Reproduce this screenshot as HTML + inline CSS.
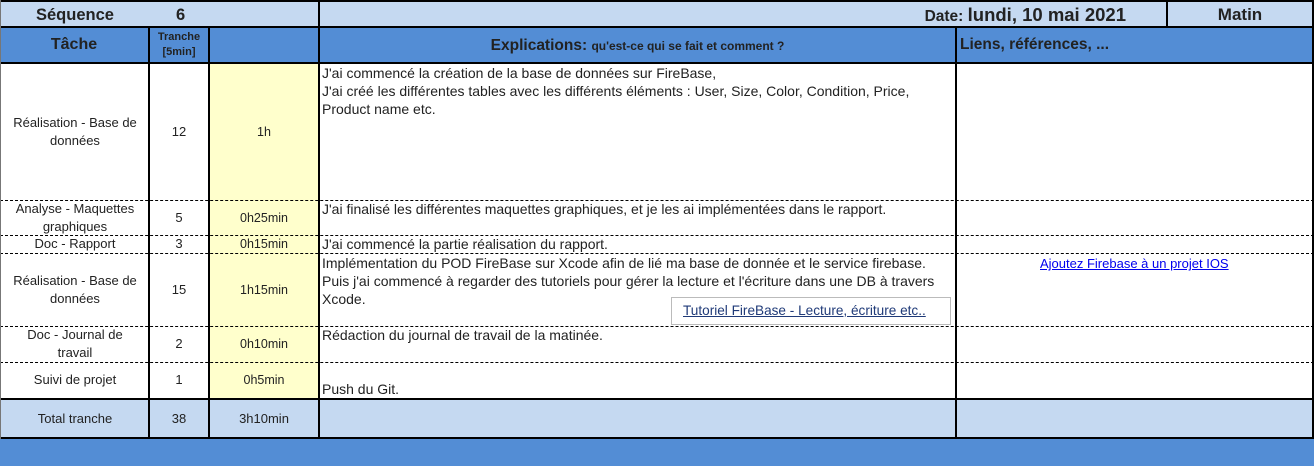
<!DOCTYPE html>
<html><head><meta charset="utf-8"><style>
*{margin:0;padding:0;box-sizing:border-box}
body{width:1314px;height:466px;background:#fff;position:relative;overflow:hidden;font-family:"Liberation Sans",sans-serif;color:#222}
.a{position:absolute}
.bg{position:absolute}
.v{position:absolute;background:#000;width:2px}
.h{position:absolute;background:#000;height:2px}
.d{position:absolute;height:0;border-top:1px dashed #000}
.c{position:absolute;display:flex;align-items:center;justify-content:center;text-align:center;font-size:13px;line-height:18px}
.t{position:absolute;font-size:14px;line-height:18px;white-space:nowrap}
</style></head><body>
<div class="bg" style="left:0;top:0;width:1314px;height:27px;background:#c5d9f1"></div>
<div class="bg" style="left:0;top:27px;width:1314px;height:36px;background:#538dd5"></div>
<div class="bg" style="left:210px;top:63px;width:109px;height:336px;background:#ffffcc"></div>
<div class="bg" style="left:0;top:399px;width:1314px;height:39px;background:#c5d9f1"></div>
<div class="bg" style="left:0;top:439px;width:1314px;height:27px;background:#538dd5"></div>
<div class="h" style="left:0;top:0;width:1314px"></div>
<div class="h" style="left:0;top:26px;width:1314px"></div>
<div class="h" style="left:0;top:62px;width:1314px"></div>
<div class="d" style="left:0;top:200px;width:1314px"></div>
<div class="d" style="left:0;top:235px;width:1314px"></div>
<div class="d" style="left:0;top:253px;width:1314px"></div>
<div class="d" style="left:0;top:326px;width:1314px"></div>
<div class="d" style="left:0;top:362px;width:1314px"></div>
<div class="h" style="left:0;top:398px;width:1314px"></div>
<div class="h" style="left:0;top:437px;width:1314px"></div>
<div class="v" style="left:0;top:0;height:439px;width:1px;background:#777"></div>
<div class="v" style="left:318px;top:0;height:439px"></div>
<div class="v" style="left:1312px;top:0;height:439px"></div>
<div class="v" style="left:1166px;top:0;height:27px"></div>
<div class="v" style="left:148px;top:27px;height:412px"></div>
<div class="v" style="left:208px;top:27px;height:412px"></div>
<div class="v" style="left:955px;top:27px;height:412px"></div>
<div class="t" style="left:36px;top:5px;font-size:16.5px;font-weight:bold;line-height:20px">Séquence</div>
<div class="t" style="left:176px;top:5px;font-size:16.5px;font-weight:bold;line-height:20px">6</div>
<div class="t" style="right:188px;top:5px;font-weight:bold;font-size:15.5px;line-height:20px">Date: <span style="font-size:18.5px">lundi, 10 mai 2021</span></div>
<div class="c" style="left:1168px;top:3px;width:144px;height:24px;font-size:17px;font-weight:bold">Matin</div>
<div class="c" style="left:0;top:28px;width:148px;height:34px;font-size:16px;font-weight:bold">Tâche</div>
<div class="c" style="left:150px;top:28px;width:58px;height:34px;font-size:11px;font-weight:bold;line-height:15px">Tranche<br>[5min]</div>
<div class="c" style="left:320px;top:29px;width:635px;height:34px;font-weight:bold;font-size:15.5px">Explications:&nbsp;<span style="font-size:12px">qu'est-ce qui se fait et comment ?</span></div>
<div class="t" style="left:960px;top:36px;font-weight:bold;font-size:15.5px">Liens, références, ...</div>
<div class="c" style="left:2px;top:63px;width:146px;height:137px">Réalisation - Base de<br>données</div>
<div class="c" style="left:2px;top:200px;width:146px;height:35px">Analyse - Maquettes<br>graphiques</div>
<div class="c" style="left:2px;top:235px;width:146px;height:18px">Doc - Rapport</div>
<div class="c" style="left:2px;top:253px;width:146px;height:73px">Réalisation - Base de<br>données</div>
<div class="c" style="left:2px;top:326px;width:146px;height:36px">Doc - Journal de<br>travail</div>
<div class="c" style="left:2px;top:362px;width:146px;height:36px">Suivi de projet</div>
<div class="c" style="left:2px;top:400px;width:146px;height:37px">Total tranche</div>
<div class="c" style="left:150px;top:63px;width:58px;height:137px">12</div>
<div class="c" style="left:150px;top:200px;width:58px;height:35px">5</div>
<div class="c" style="left:150px;top:235px;width:58px;height:18px">3</div>
<div class="c" style="left:150px;top:253px;width:58px;height:73px">15</div>
<div class="c" style="left:150px;top:326px;width:58px;height:36px">2</div>
<div class="c" style="left:150px;top:362px;width:58px;height:36px">1</div>
<div class="c" style="left:150px;top:400px;width:58px;height:37px">38</div>
<div class="c" style="left:210px;top:63px;width:108px;height:137px;font-size:12.5px">1h</div>
<div class="c" style="left:210px;top:200px;width:108px;height:35px;font-size:12.5px">0h25min</div>
<div class="c" style="left:210px;top:235px;width:108px;height:18px;font-size:12.5px">0h15min</div>
<div class="c" style="left:210px;top:253px;width:108px;height:73px;font-size:12.5px">1h15min</div>
<div class="c" style="left:210px;top:326px;width:108px;height:36px;font-size:12.5px">0h10min</div>
<div class="c" style="left:210px;top:362px;width:108px;height:36px;font-size:12.5px">0h5min</div>
<div class="c" style="left:210px;top:400px;width:108px;height:37px">3h10min</div>
<div class="t" style="left:322px;top:64px">J'ai commencé la création de la base de données sur FireBase,<br>J'ai créé les différentes tables avec les différents éléments : User, Size, Color, Condition, Price,<br>Product name etc.</div>
<div class="t" style="left:322px;top:200px">J'ai finalisé les différentes maquettes graphiques, et je les ai implémentées dans le rapport.</div>
<div class="t" style="left:322px;top:235px">J'ai commencé la partie réalisation du rapport.</div>
<div class="t" style="left:322px;top:254px">Implémentation du POD FireBase sur Xcode afin de lié ma base de donnée et le service firebase.<br>Puis j'ai commencé à regarder des tutoriels pour gérer la lecture et l'écriture dans une DB à travers<br>Xcode.</div>
<div class="a" style="left:671px;top:297px;width:280px;height:28px;border:1px solid #bbb;background:#fff"></div>
<div class="t" style="left:683px;top:302px;color:#1f3a78;text-decoration:underline;font-size:13.6px">Tutoriel FireBase - Lecture, écriture etc..</div>
<div class="t" style="left:322px;top:326px">Rédaction du journal de travail de la matinée.</div>
<div class="t" style="left:322px;top:380px">Push du Git.</div>
<div class="t" style="left:1040px;top:255px;color:#0000ee;text-decoration:underline;font-size:13px">Ajoutez Firebase à un projet IOS</div>
</body></html>
